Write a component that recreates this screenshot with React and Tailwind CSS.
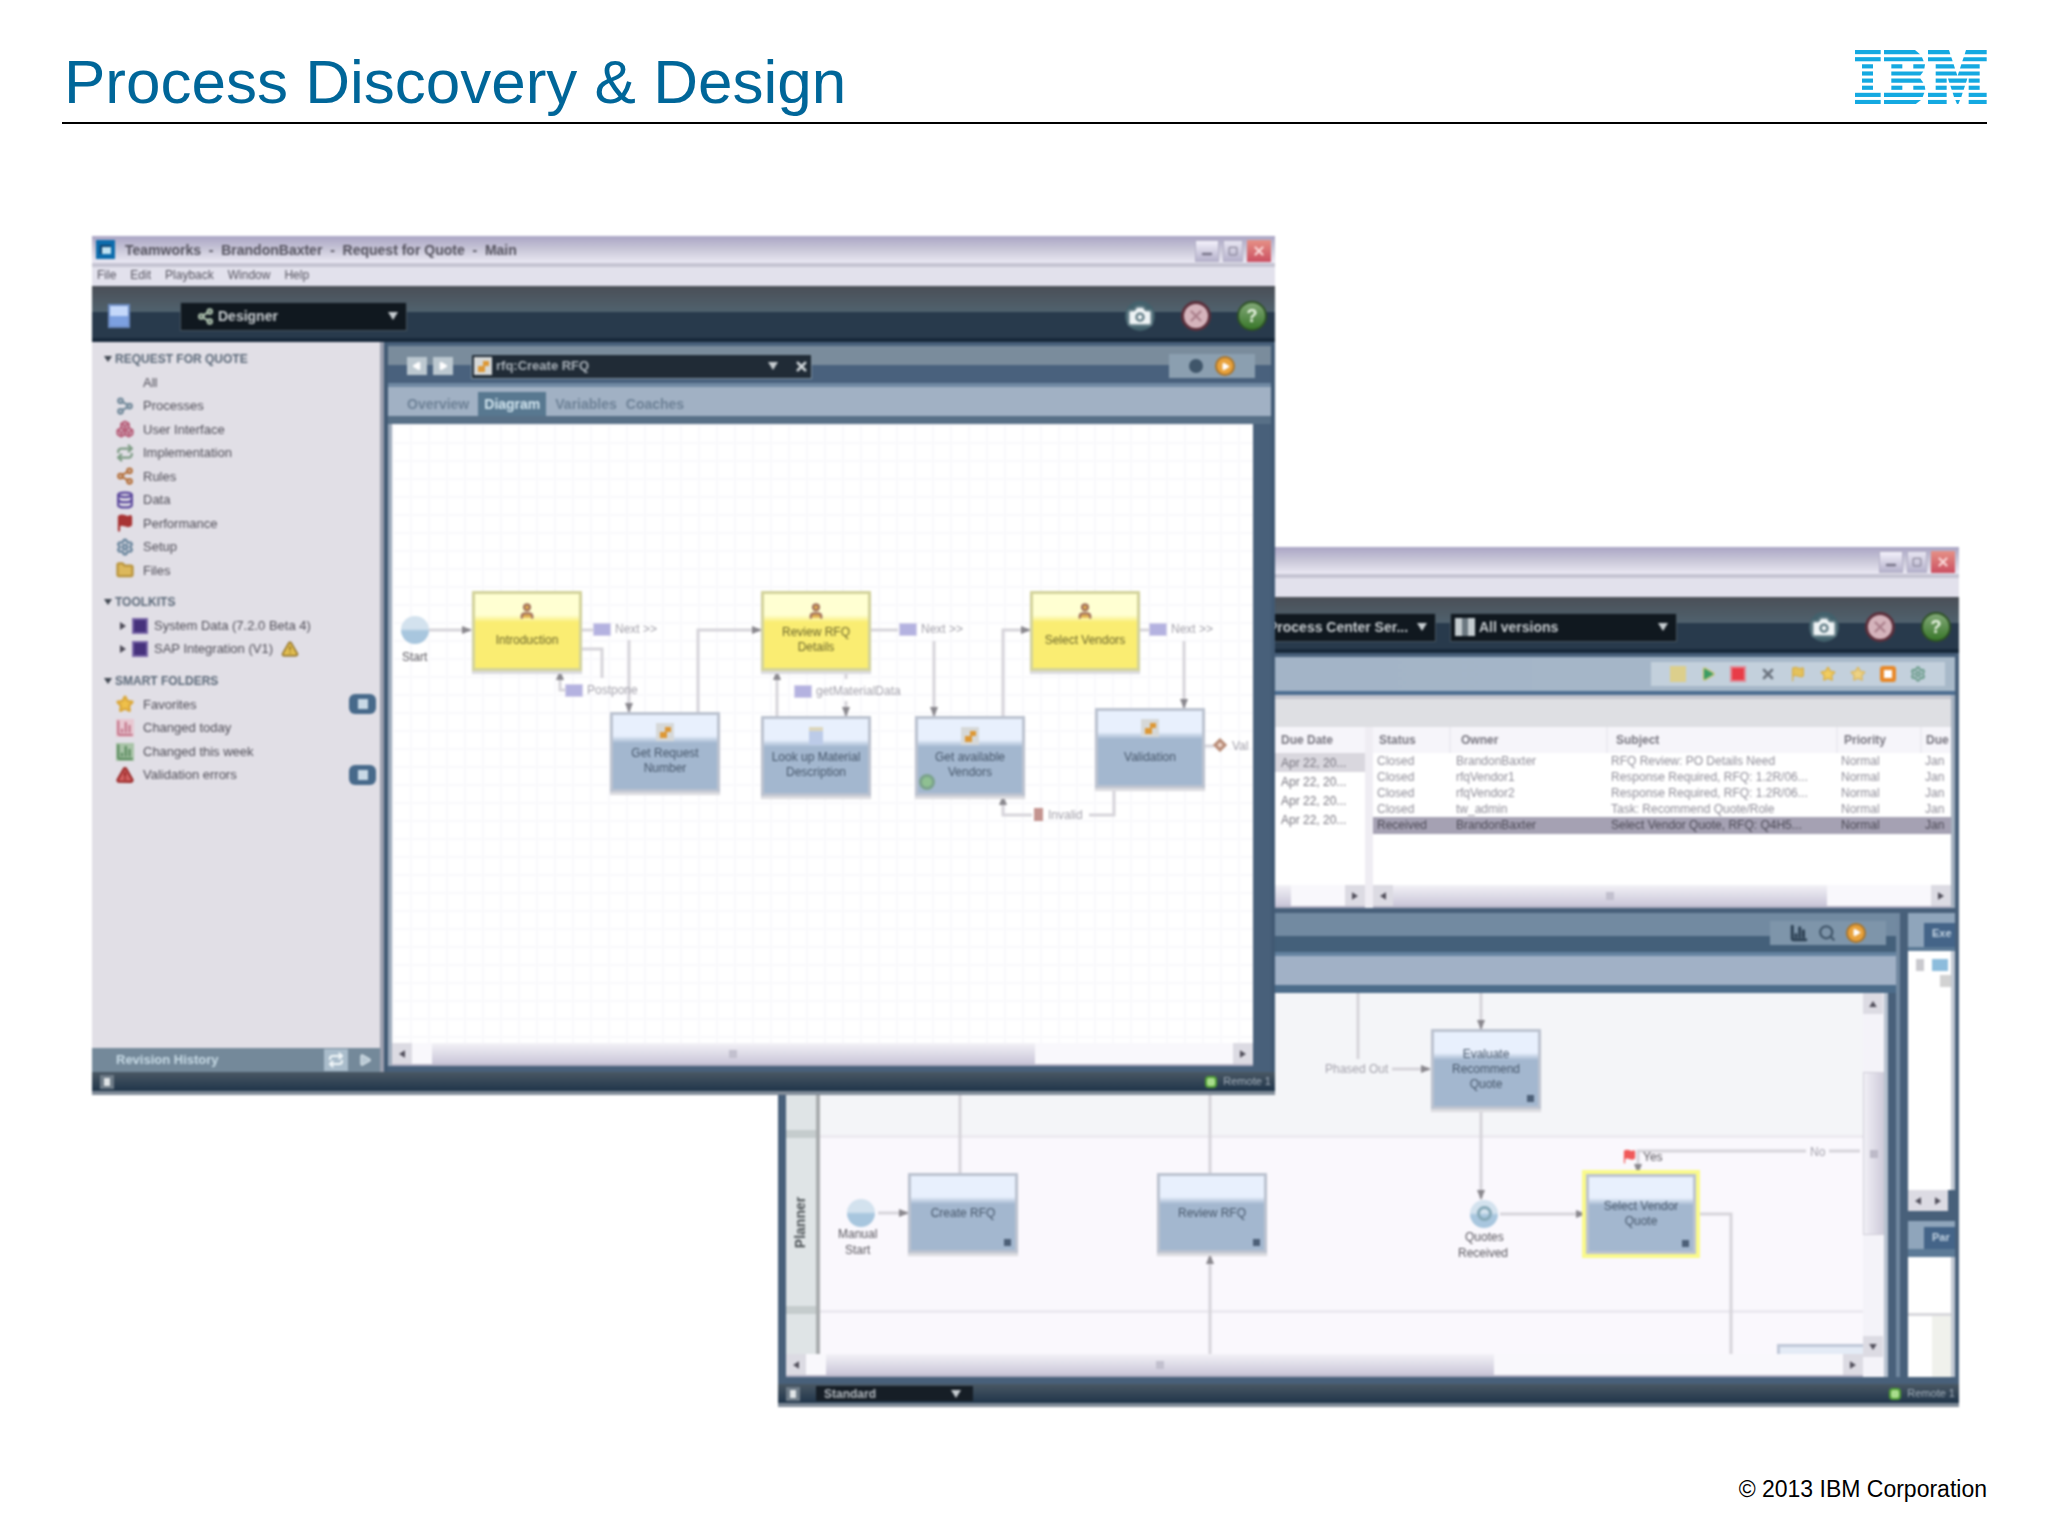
import React from 'react';
import {
    Boxes, Camera, ChartColumn, Database, Flag, Folder, Minus, Play, Repeat,
    Search, Settings, Share2, Square, Star, TriangleAlert, User, X,
} from 'lucide-react';

const treeItems = [
    { label: 'All' },
    { label: 'Processes', icon: Share2, color: 'text-[#71899a]', flip: true },
    { label: 'User Interface', icon: Boxes, color: 'text-[#b8627c]' },
    { label: 'Implementation', icon: Repeat, color: 'text-[#7d9c84]' },
    { label: 'Rules', icon: Share2, color: 'text-[#b5713c]' },
    { label: 'Data', icon: Database, color: 'text-[#5a479c]' },
    { label: 'Performance', icon: Flag, color: 'text-[#a83434] fill-[#a83434]' },
    { label: 'Setup', icon: Settings, color: 'text-[#66839b]' },
    { label: 'Files', icon: Folder, color: 'text-[#b8933c] fill-[#dcb85c]' },
];

const toolkits = [
    { label: 'System Data (7.2.0 Beta 4)' },
    { label: 'SAP Integration (V1)', warn: true },
];

const folders = [
    { label: 'Favorites', icon: Star, color: 'text-[#dba83c] fill-[#efc04a]', badge: true },
    { label: 'Changed today', icon: ChartColumn, color: 'text-[#c4788c] bg-[#e8c8d2]' },
    { label: 'Changed this week', icon: ChartColumn, color: 'text-[#5c8c60] bg-[#a9c4a8]' },
    { label: 'Validation errors', icon: TriangleAlert, color: 'text-[#9c2c2c] fill-[#d06060]', badge: true },
];

const tasks = [
    { status: 'Closed', owner: 'BrandonBaxter', subject: 'RFQ Review: PO Details Need', priority: 'Normal' },
    { status: 'Closed', owner: 'rfqVendor1', subject: 'Response Required, RFQ: 1.2R/06...', priority: 'Normal' },
    { status: 'Closed', owner: 'rfqVendor2', subject: 'Response Required, RFQ: 1.2R/06...', priority: 'Normal' },
    { status: 'Closed', owner: 'tw_admin', subject: 'Task: Recommend Quote/Role', priority: 'Normal' },
    { status: 'Received', owner: 'BrandonBaxter', subject: 'Select Vendor Quote, RFQ: Q4H5...', priority: 'Normal', active: true },
];

function IbmLogo() {
    // each bar: [top left, top right, bottom left, bottom right]
    const bars = [
        [[0, 77, 0, 77], [87, 180, 87, 195], [219, 282, 219, 286], [333, 395, 329, 395]],
        [[0, 77, 0, 77], [87, 201, 87, 206], [219, 289, 219, 293], [326, 395, 322, 395]],
        [[21, 54, 21, 54], [109, 142, 109, 142], [175, 210, 175, 208], [242, 296, 242, 300], [319, 374, 315, 374]],
        [[21, 54, 21, 54], [109, 205, 109, 196], [242, 303, 242, 307], [312, 374, 308, 374]],
        [[21, 54, 21, 54], [109, 196, 109, 205], [242, 275, 242, 275], [279, 337, 283, 333], [341, 374, 341, 374]],
        [[21, 54, 21, 54], [109, 142, 109, 142], [175, 209, 175, 211], [242, 275, 242, 275], [286, 330, 290, 326], [341, 374, 341, 374]],
        [[0, 77, 0, 77], [87, 208, 87, 203], [219, 275, 219, 275], [293, 323, 297, 319], [341, 395, 341, 395]],
        [[0, 77, 0, 77], [87, 198, 87, 182], [219, 275, 219, 275], [301, 315, 306, 310], [341, 395, 341, 395]],
    ];
    return (
        <svg viewBox="0 0 396 162" className="mt-1 h-[54px] w-[132px]" fill="#14a9e1" role="img" aria-label="IBM">
            {bars.map((row, i) => row.map(([a, b, c, d]) => (
                <polygon key={`${i}-${a}`} points={`${a},${i * 21.4} ${b},${i * 21.4} ${d},${i * 21.4 + 12.5} ${c},${i * 21.4 + 12.5}`} />
            )))}
        </svg>
    );
}

function TitleBar({ title }) {
    return (
        <div className="flex h-[31px] items-start border-b-4 border-[#c5c4d2] bg-linear-to-b from-[#aaa5c4] via-[#c9c7d8] to-[#ebe9f4] pl-1">
            {title && (
                <>
                    <div className="mt-1 flex h-[19px] w-[19px] items-center justify-center bg-[#0d6cac]">
                        <div className="h-[9px] w-[11px] border-t-2 border-l-2 border-[#0d3f6c] bg-[#bfe2f2]"></div>
                    </div>
                    <h2 className="ml-[10px] text-[14px] leading-[28px] font-bold whitespace-pre text-[#55535f]">{title}</h2>
                </>
            )}
            <div className="mt-1 mr-1 ml-auto flex gap-1">
                <button aria-label="Minimize" className="flex h-[22px] w-6 items-end justify-center border border-[#b3b0c6] bg-linear-to-b from-[#f4f2fc] to-[#b5b1cb]"><Minus size={14} strokeWidth={4} className="text-[#777488]" /></button>
                <button aria-label="Restore" className="flex h-[22px] w-5 items-center justify-center border border-[#b3b0c6] bg-linear-to-b from-[#e8e6f2] to-[#b5b1cb]"><Square size={10} strokeWidth={3} className="text-[#8a879a]" /></button>
                <button aria-label="Close" className="flex h-[22px] w-6 items-center justify-center bg-linear-to-b from-[#e59086] to-[#cb4f62]"><X size={14} strokeWidth={4} className="text-[#f8d4d4]" /></button>
            </div>
        </div>
    );
}

function MenuBar({ items = [] }) {
    return (
        <nav className="flex h-[19px] items-center gap-[14px] bg-[#e2e1ec] pb-1 pl-[5px] text-[12px] text-[#55535f]">
            {items.map((item) => <button key={item}>{item}</button>)}
        </nav>
    );
}

function DarkSelect({ label, value, width, icon }) {
    return (
        <label className={`relative flex h-[29px] items-center gap-1 border border-[#47545f] bg-[#10181f] text-[14px] font-bold text-[#c9ced2] ${width}`}>
            {icon}
            <select aria-label={label} className="w-full appearance-none bg-transparent outline-none">
                <option>{value}</option>
            </select>
            <Caret className="mr-2" />
        </label>
    );
}

function Caret({ className = '' }) {
    return (
        <svg viewBox="0 0 10 8" className={`h-2 w-[10px] shrink-0 ${className}`} fill="#c6ccd0"><path d="M0 0h10L5 8z" /></svg>
    );
}

function RoundButtons() {
    return (
        <div className="mr-2 ml-auto flex items-center gap-[26px]">
            <button aria-label="Snapshot" className="flex h-[30px] w-[30px] items-center justify-center rounded-full bg-[#43616c]">
                <Camera size={28} strokeWidth={2} className="fill-[#eef3f5] text-[#637d86]" />
            </button>
            <button aria-label="Stop" className="flex h-[30px] w-[30px] items-center justify-center rounded-full border-3 border-[#5c303c] bg-[#d5b4bc]">
                <X size={18} strokeWidth={3} className="text-[#ab808c]" />
            </button>
            <button aria-label="Help" className="flex h-[30px] w-[30px] items-center justify-center rounded-full border-2 border-[#2d5224] bg-linear-to-b from-[#82a877] to-[#39782a] text-[18px] font-bold text-[#e8f4e2]">?</button>
        </div>
    );
}

function ToolBar({ children }) {
    return (
        <div className="flex h-14 items-center border-b-4 border-[#17283a] bg-linear-to-b from-[#4a4f57] from-0% via-[#50626e] via-50% to-[#283a4c] to-50% pt-2">
            {children}
            <RoundButtons />
        </div>
    );
}

function ScrollArrow({ dir, label }) {
    const turn = { left: 'rotate-180', right: '', up: '-rotate-90', down: 'rotate-90' }[dir];
    return (
        <button aria-label={label} className="flex h-[21px] w-5 shrink-0 items-center justify-center bg-[#dcdbe3]">
            <svg viewBox="0 0 8 10" className={`h-2 w-[6px] ${turn}`} fill="#504e5a"><path d="M0 0l8 5-8 5z" /></svg>
        </button>
    );
}

function HScroll({ thumb, className = '' }) {
    return (
        <div className={`flex h-[23px] shrink-0 items-center border-b-2 border-[#b4b2c4] bg-[#f9f8fc] ${className}`}>
            <ScrollArrow dir="left" label="Scroll left" />
            <div className={`flex h-full items-center justify-center bg-linear-to-b from-[#f3f2f7] to-[#c9c6d8] ${thumb}`}>
                <div className="h-2 w-2 bg-[#c2c0ce]"></div>
            </div>
            <div className="ml-auto"><ScrollArrow dir="right" label="Scroll right" /></div>
        </div>
    );
}

function StatusBar({ children }) {
    return (
        <footer className="flex h-[23px] shrink-0 items-center border-b-4 border-[#808b98] bg-linear-to-b from-[#4a5864] to-[#20354a] pr-1">
            <div className="ml-2 flex h-[14px] w-[14px] items-center justify-center bg-[#6f7c88]"><div className="h-2 w-[6px] bg-[#dfe4e6]"></div></div>
            {children}
            <div className="ml-auto h-3 w-3 rounded-sm border-2 border-[#4f9c34] bg-[#a8dc8c]"></div>
            <span className="ml-[6px] text-[11px] leading-none text-[#a5b1bd]">Remote 1</span>
        </footer>
    );
}

function TreeHeading({ children }) {
    return (
        <button className="flex flex-1 items-center pl-3 text-[12px] font-bold text-[#5a6878]">
            <svg viewBox="0 0 8 6" className="mr-[3px] h-[6px] w-2" fill="#3f4650"><path d="M0 0h8L4 6z" /></svg>
            {children}
        </button>
    );
}

function TreeItem({ item }) {
    const Icon = item.icon;
    return (
        <li className="flex min-h-0 flex-1 items-center pr-1 pl-6 text-[13px] text-[#504e58]">
            <span className="flex w-[27px] items-center">
                {Icon && <Icon size={18} strokeWidth={3} className={`${item.color} ${item.flip ? 'rotate-180' : ''}`} />}
            </span>
            <a href="#item">{item.label}</a>
            {item.badge && (
                <span className="ml-auto flex h-5 w-[27px] items-center justify-center rounded-md bg-[#47698a]">
                    <span className="h-[10px] w-[10px] bg-[#c8d8e6]"></span>
                </span>
            )}
        </li>
    );
}

function Sidebar() {
    return (
        <aside className="flex w-[292px] shrink-0 flex-col border-r-4 border-[#9a9fae] bg-[#e1dfe6]">
            <div className="flex grow flex-col pt-[5px]">
                <div className="flex h-[235px] flex-col">
                    <TreeHeading>REQUEST FOR QUOTE</TreeHeading>
                    <ul className="flex flex-9 flex-col">
                        {treeItems.map((item) => <TreeItem key={item.label} item={item} />)}
                    </ul>
                </div>
                <div className="mt-2 flex h-[71px] flex-col">
                    <TreeHeading>TOOLKITS</TreeHeading>
                    {toolkits.map((kit) => (
                        <div key={kit.label} className="flex flex-1 items-center pl-7 text-[13px] text-[#504e58]">
                            <svg viewBox="0 0 6 8" className="h-2 w-[6px]" fill="#4c4a56"><path d="M0 0l6 4-6 4z" /></svg>
                            <span className="mx-[6px] h-4 w-4 border-2 border-[#7a68a8] bg-[#46327c]"></span>
                            <a href="#toolkit">{kit.label}</a>
                            {kit.warn && <TriangleAlert size={18} className="ml-2 fill-[#e0bc50] text-[#8c6c20]" />}
                        </div>
                    ))}
                </div>
                <div className="mt-2 flex h-[118px] flex-col">
                    <TreeHeading>SMART FOLDERS</TreeHeading>
                    <ul className="flex flex-4 flex-col">
                        {folders.map((item) => <TreeItem key={item.label} item={item} />)}
                    </ul>
                </div>
            </div>
            <div className="flex h-6 items-center bg-[#74899a] pr-2 pl-6 text-[13px] font-bold text-[#c8dbe6]">
                Revision History
                <span className="ml-auto flex h-[22px] w-6 items-center justify-center bg-[#a9bccb]"><Repeat size={16} strokeWidth={3} className="text-[#f2f8fa]" /></span>
                <Play size={14} className="ml-[10px] fill-[#b8c8d4] text-[#d8e4ea]" />
            </div>
        </aside>
    );
}

function PlayDot() {
    return (
        <button aria-label="Run" className="flex h-5 w-5 items-center justify-center rounded-full border-2 border-[#a8742c] bg-[#e8a23c]"><Play size={9} className="fill-white text-white" /></button>
    );
}

// x / y are canvas coordinates of the node's top left corner
function Node({ x, y, label, tone = 'blue', icon, selected, subprocess }) {
    const tones = {
        yellow: 'border-[#d3d39c] from-[#ffffd2] to-[#faed72]',
        blue: 'border-[#bcc3d0] from-[#e8f0fd] to-[#a3b7cf]',
    };
    return (
        <div
            className={`absolute flex h-20 w-[110px] flex-col items-center justify-center border-3 bg-linear-to-b from-28% to-38% text-center text-[12px] leading-[15px] ${tones[tone]} ${icon ? 'pt-2 pb-2' : ''} ${selected ? 'outline-4 outline-[#fafa8a]' : 'shadow-[0_3px_1px_#dcdce0]'}`}
            style={{ left: x, top: y }}
        >
            {icon === 'user' && <User size={18} strokeWidth={3} className="shrink-0 fill-[#e0b050] text-[#a2705c]" />}
            {icon === 'script' && <Flow />}
            {icon === 'page' && <div className="h-[18px] w-[14px] shrink-0 border-t-4 border-[#dcd6bc] bg-[#bccbe8]"></div>}
            <span className={`flex items-center whitespace-pre ${icon ? 'grow' : ''} ${tone === 'yellow' ? 'text-[#6c662c]' : 'text-[#46566a]'}`}>{label}</span>
            {subprocess && <span className="absolute right-1 bottom-1 h-[7px] w-[7px] bg-[#4d6078]"></span>}
        </div>
    );
}

function Flow() {
    return (
        <svg viewBox="0 0 18 18" className="h-[18px] w-[18px] shrink-0">
            <rect width="18" height="18" fill="#d6d8d8" />
            <path d="M4 15V9h5V4h6v5h-4v6z" fill="#dd9836" />
        </svg>
    );
}

function Label({ x, y, children, icon, dark }) {
    return (
        <span className={`absolute flex h-4 items-center gap-1 text-center text-[12px] leading-4 whitespace-pre ${dark ? 'text-[#57555c]' : 'text-[#a3a1ab]'}`} style={{ left: x, top: y - 8 }}>
            {icon && <i className="h-[13px] w-[18px] border border-[#d4d2ea] bg-[#b4b2e0]"></i>}
            {children}
        </span>
    );
}

function Edges({ paths, id }) {
    return (
        <svg className="absolute inset-0 h-full w-full" fill="none" stroke="#d6d4da" strokeWidth="3">
            <defs>
                <marker id={id} markerUnits="userSpaceOnUse" markerWidth="10" markerHeight="8" refX="9" refY="4" orient="auto">
                    <path d="M0 0l10 4-10 4z" fill="#8a888e" stroke="none" />
                </marker>
            </defs>
            {paths.map(([d, arrow]) => <path key={d} d={d} markerEnd={arrow ? `url(#${id})` : undefined} />)}
        </svg>
    );
}

function Ball({ x, y }) {
    return (
        <div className="absolute h-7 w-7 rounded-full bg-linear-to-b from-[#d3e2ee] from-45% to-[#a8c6de] to-55%" style={{ left: x - 14, top: y - 14 }}></div>
    );
}

const designerEdges = [
    ['M37 206H79', true],
    ['M189 206H202'],
    ['M237 216V288', true],
    ['M189 225H210V254'],
    ['M173 266H168V247', true],
    ['M306 288V206H369', true],
    ['M479 206H506'],
    ['M542 217V292', true],
    ['M385 292V247', true],
    ['M454 247V255'],
    ['M454 277V292', true],
    ['M611 292V206H638', true],
    ['M748 206H757'],
    ['M792 217V284', true],
    ['M812 322H822'],
    ['M722 364V391H697'],
    ['M640 391H611V372', true],
];

function DesignerCanvas() {
    return (
        <div className="relative grow overflow-hidden bg-white bg-[linear-gradient(#f9f9fc_2px,transparent_2px),linear-gradient(90deg,#f9f9fc_2px,transparent_2px)] bg-size-[18px_18px]">
            <Edges id="arrow-a" paths={designerEdges} />
            <Ball x={23} y={206} />
            <Label x={10} y={233} dark>Start</Label>
            <Node x={80} y={167} tone="yellow" icon="user" label="Introduction" />
            <Node x={218} y={288} icon="script" label={'Get Request\nNumber'} />
            <Node x={369} y={167} tone="yellow" icon="user" label={'Review RFQ\nDetails'} />
            <Node x={369} y={292} icon="page" label={'Look up Material\nDescription'} />
            <Node x={523} y={292} icon="script" label={'Get available\nVendors'} />
            <Node x={638} y={167} tone="yellow" icon="user" label="Select Vendors" />
            <Node x={703} y={284} icon="script" label="Validation" />
            <div className="absolute top-[350px] left-[527px] h-4 w-4 rounded-full border-3 border-[#7ba38c] bg-[#8fc092]"></div>
            <Label x={201} y={205} icon>Next &gt;&gt;</Label>
            <Label x={173} y={266} icon>Postpone</Label>
            <Label x={507} y={205} icon>Next &gt;&gt;</Label>
            <Label x={402} y={267} icon>getMaterialData</Label>
            <Label x={757} y={205} icon>Next &gt;&gt;</Label>
            <div className="absolute top-[384px] left-[642px] h-[13px] w-[9px] bg-[#c49490]"></div>
            <Label x={656} y={391}>Invalid</Label>
            <div className="absolute top-[316px] left-[823px] h-[10px] w-[10px] rotate-45 border-3 border-[#b88c78] bg-[#f0d8cc]"></div>
            <Label x={840} y={322}>Val</Label>
        </div>
    );
}

function DesignerWindow() {
    return (
        <section className="absolute top-[112px] right-[773px] left-[92px] z-10 flex h-[859px] flex-col bg-[#48607a] blur-[1px]">
            <TitleBar title="Teamworks  -  BrandonBaxter  -  Request for Quote  -  Main" />
            <MenuBar items={['File', 'Edit', 'Playback', 'Window', 'Help']} />
            <ToolBar>
                <button aria-label="Save" className="mr-[50px] ml-4 h-6 w-[22px] border-2 border-[#6c8cc4] bg-linear-to-b from-[#c4d8fa] from-50% to-[#7ca0e0] to-50%"></button>
                <DarkSelect
                    label="View"
                    value="Designer"
                    width="w-[227px] pl-4"
                    icon={<Share2 size={17} strokeWidth={3} className="shrink-0 text-[#b4c8b4]" />}
                />
            </ToolBar>
            <div className="flex min-h-0 grow">
                <Sidebar />
                <div className="flex min-w-0 grow flex-col border-r-4 border-l-4 border-[#425a74] pt-1">
                    <div className="flex h-[37px] shrink-0 items-center bg-linear-to-b from-[#7a8c9c] from-50% to-[#49617d] to-50% pt-[3px] pr-4 pl-[19px]">
                        <button aria-label="Back" className="flex h-[18px] w-5 items-center justify-center bg-[#bcc8d0]"><Play size={10} className="rotate-180 fill-white text-white" /></button>
                        <button aria-label="Forward" className="ml-[6px] flex h-[18px] w-5 items-center justify-center bg-[#bcc8d0]"><Play size={10} className="fill-white text-white" /></button>
                        <div className="ml-[18px] flex h-[25px] w-[341px] items-center gap-1 border border-[#7f919f] bg-[#202b36] pl-[2px] text-[13px] font-bold text-[#aab2ba]">
                            <Flow />
                            <select aria-label="Open item" className="grow appearance-none bg-transparent outline-none"><option>rfq:Create RFQ</option></select>
                            <Caret />
                            <button aria-label="Close item" className="mr-[2px] ml-3"><X size={15} strokeWidth={4} className="text-[#d0d6da]" /></button>
                        </div>
                        <div className="ml-auto flex h-6 w-[86px] items-center justify-end gap-3 bg-[#8b9fb0] pr-5">
                            <i className="h-[14px] w-[14px] rounded-full bg-[#40566a]"></i>
                            <PlayDot />
                        </div>
                    </div>
                    <div className="flex h-[41px] shrink-0 items-end gap-[9px] border-t-4 border-b-8 border-t-[#7089a3] border-b-[#587087] bg-[#a1b1c4] pl-[19px] text-[14px] font-bold text-[#6d8196]">
                        <button className="h-6">Overview</button>
                        <button className="h-6 bg-[#587890] px-[6px] text-[#d3e6f0]">Diagram</button>
                        <button className="h-6">Variables</button>
                        <button className="h-6">Coaches</button>
                    </div>
                    <div className="mr-1 flex min-h-0 grow flex-col border-r-14 border-l-4 border-r-[#48607a] border-l-[#9ca9ba]">
                        <DesignerCanvas />
                        <HScroll thumb="ml-5 w-[70%]" />
                    </div>
                    <div className="h-[6px] shrink-0"></div>
                </div>
            </div>
            <StatusBar />
        </section>
    );
}

function TaskTables() {
    return (
        <div className="flex h-[181px] shrink-0 bg-white text-[12px]">
            <div className="flex w-[595px] shrink-0 flex-col border-r-8 border-[#efedf3]">
                <table className="w-full text-left text-[#77757f]">
                    <thead className="h-[26px] bg-[#f6f5fa]">
                        <tr><th className="pl-[503px] whitespace-nowrap">Due Date</th></tr>
                    </thead>
                    <tbody>
                        {[0, 1, 2, 3].map((i) => (
                            <tr key={i} className={i === 0 ? 'h-[19px] bg-[#d9d7de]' : 'h-[19px]'}>
                                <td className="pl-[503px] whitespace-nowrap">Apr 22, 20...</td>
                            </tr>
                        ))}
                    </tbody>
                </table>
                <HScroll thumb="w-[84%]" className="mt-auto" />
            </div>
            <div className="flex min-w-0 grow flex-col overflow-hidden">
                <table className="w-full table-fixed text-left text-[#8f8d98]">
                    <thead className="h-[26px] bg-[#f6f5fa] text-[#77757f]">
                        <tr>
                            <th className="w-[77px] border-r-2 border-[#ecebf1] pl-[6px]">Status</th>
                            <th className="w-[157px] border-r-2 border-[#ecebf1] pl-[10px]">Owner</th>
                            <th className="w-[230px] border-r-2 border-[#ecebf1] pl-2">Subject</th>
                            <th className="w-[84px] border-r-2 border-[#ecebf1] pl-[6px]">Priority</th>
                            <th className="pl-1 whitespace-nowrap">Due</th>
                        </tr>
                    </thead>
                    <tbody>
                        {tasks.map((t, i) => (
                            <tr key={i} className={t.active ? 'h-[17px] bg-[#a5a1b3] leading-[15px] text-[#4c4a56]' : 'h-4 leading-[15px]'}>
                                <td className="pl-1">{t.status}</td>
                                <td className="pl-[6px]">{t.owner}</td>
                                <td className="pl-1 whitespace-nowrap">{t.subject}</td>
                                <td className="pl-1">{t.priority}</td>
                                <td className="pl-1 whitespace-nowrap">Jan</td>
                            </tr>
                        ))}
                    </tbody>
                </table>
                <HScroll thumb="w-[75%]" className="mt-auto" />
            </div>
        </div>
    );
}

const inspectorEdges = [
    ['M140 0V180'],
    ['M390 0V180'],
    ['M390 365V262', true],
    ['M661 0V36', true],
    ['M538 0V66'],
    ['M572 76H610', true],
    ['M661 118V206', true],
    ['M680 221H765', true],
    ['M1040 158H1009'],
    ['M986 158H818V180', true],
    ['M878 221H911V365'],
    ['M58 220H88', true],
];

function InspectorCanvas() {
    return (
        <div className="relative min-w-0 grow overflow-hidden bg-[#faf8fd]">
            <div className="h-[145px] border-b-3 border-[#eceaf0] bg-[#f4f5f8]"></div>
            <div className="h-[175px] border-b-3 border-[#ebe9f0]"></div>
            <Edges id="arrow-b" paths={inspectorEdges} />
            <Ball x={41} y={220} />
            <Label x={18} y={241} dark>Manual</Label>
            <Label x={25} y={257} dark>Start</Label>
            <Node x={88} y={180} label="Create RFQ" subprocess />
            <Node x={337} y={180} label="Review RFQ" subprocess />
            <Node x={611} y={36} label={'Evaluate\nRecommend\nQuote'} subprocess />
            <Node x={766} y={181} label={'Select Vendor\nQuote'} subprocess selected />
            <Label x={505} y={76}>Phased Out</Label>
            <Ball x={664} y={221} />
            <div className="absolute top-[213px] left-[657px] h-[15px] w-[15px] rounded-full border-3 border-[#86a9b8]"></div>
            <Label x={645} y={244} dark>Quotes</Label>
            <Label x={638} y={260} dark>Received</Label>
            <Flag size={15} className="absolute top-[156px] left-[802px] fill-[#f05a5a] text-[#f05a5a]" />
            <Label x={823} y={164} dark>Yes</Label>
            <Label x={990} y={159}>No</Label>
            <div className="absolute right-0 bottom-0 h-[10px] w-[86px] border-t-3 border-l-3 border-[#c0c8d8] bg-[#e4ebf6]"></div>
        </div>
    );
}

function InspectorTools() {
    return (
        <div className="ml-auto flex h-6 w-[294px] items-center justify-center gap-[14px] bg-[#c3d0dc]">
            <i className="h-4 w-4 bg-[#dccf8c]"></i>
            <Play size={16} className="fill-[#3c9c64] text-[#c8c47c]" />
            <i className="h-4 w-4 border-2 border-[#e08c98] bg-[#e83c48]"></i>
            <X size={16} strokeWidth={4} className="text-[#6c7480]" />
            <Flag size={16} className="fill-[#e4c25c] text-[#d8b04c]" />
            <Star size={16} className="fill-[#f0cc60] text-[#dcb044]" />
            <Star size={16} className="fill-[#ecd284] text-[#dcb860]" />
            <Square size={16} strokeWidth={6} className="fill-white text-[#e88828]" />
            <Settings size={16} strokeWidth={3} className="text-[#6c9c8c]" />
        </div>
    );
}

function InspectorWindow() {
    return (
        <section className="absolute top-[423px] right-[89px] left-[778px] flex h-[860px] flex-col bg-[#48607a] blur-[1px]">
            <TitleBar />
            <MenuBar />
            <ToolBar>
                <div className="flex w-full min-w-0 justify-end gap-[14px] pr-[132px]">
                    <DarkSelect label="Server" value="Process Center Ser..." width="w-[227px] pl-[58px]" />
                    <DarkSelect
                        label="Version"
                        value="All versions"
                        width="w-[227px] pl-1"
                        icon={<i className="h-[18px] w-5 shrink-0 border-x-7 border-[#c4ccd0] bg-[#6c7880]"></i>}
                    />
                </div>
            </ToolBar>
            <div className="mt-1 mr-1 flex h-[38px] shrink-0 items-center border-b-4 border-[#4c6d90] bg-linear-to-r from-[#9fb0c6] to-[#a8b9c9] pr-[10px]">
                <InspectorTools />
            </div>
            <div className="mr-1 border-r-4 border-[#a3b0bf]">
                <div className="h-8 border-t-4 border-[#c3c4cd] bg-[#dedfe3]"></div>
                <TaskTables />
            </div>
            <div className="mt-[5px] mr-1 flex min-h-0 grow gap-2">
                <div className="flex min-w-0 grow flex-col border-r-4 border-l-8 border-[#7188a0] border-l-[#48607a]">
                    <div className="flex h-[39px] shrink-0 items-center bg-linear-to-b from-[#728aa1] from-60% to-[#44607a] to-60% pr-[10px]">
                        <div className="ml-auto flex h-6 w-[116px] items-center justify-center gap-[10px] bg-[#7e95aa]">
                            <ChartColumn size={18} strokeWidth={4} className="text-[#2d4154]" />
                            <Search size={18} strokeWidth={3} className="text-[#41566a]" />
                            <PlayDot />
                        </div>
                    </div>
                    <div className="h-[41px] shrink-0 border-t-4 border-b-8 border-t-[#6583a0] border-b-[#4c6c8a] bg-[#a1b1c6]"></div>
                    <div className="mr-2 flex min-h-0 grow border-r-4 border-[#b5c0ce]">
                        <div className="flex min-w-0 grow flex-col">
                            <div className="flex min-h-0 grow">
                                <div className="flex w-[34px] shrink-0 flex-col border-r-4 border-[#a9acae] bg-[#dfe4e6] text-[14px] font-bold text-[#4c5256]">
                                    <div className="h-[145px] border-b-8 border-[#c5cccd]"></div>
                                    <div className="flex h-[176px] items-center justify-center border-b-8 border-[#c5cccd]">
                                        <span className="-rotate-90">Planner</span>
                                    </div>
                                </div>
                                <InspectorCanvas />
                            </div>
                            <HScroll thumb="ml-5 w-[62%]" />
                        </div>
                        <div className="flex w-[21px] shrink-0 flex-col bg-[#f4f3f9]">
                            <ScrollArrow dir="up" label="Scroll up" />
                            <div className="mt-[58px] flex h-[163px] items-center justify-center border border-[#d0ced8] bg-linear-to-r from-[#f1f0f6] to-[#cfccdb]">
                                <div className="h-2 w-2 bg-[#bdbac8]"></div>
                            </div>
                            <div className="mt-auto mb-5"><ScrollArrow dir="down" label="Scroll down" /></div>
                        </div>
                    </div>
                </div>
                <div className="flex w-[47px] shrink-0 flex-col">
                    <div className="flex h-[38px] shrink-0 items-end border-b-4 border-[#5c7a96] bg-[#8fa5bb] pl-4">
                        <span className="h-6 w-full bg-[#446488] pl-2 text-[11px] leading-5 font-bold text-[#c3d3e2]">Exe</span>
                    </div>
                    <div className="h-[239px] overflow-hidden border-r-4 border-[#c0c8d2] bg-white pt-2 pl-2">
                        <div className="flex gap-2"><i className="h-3 w-2 bg-[#c9c9ce]"></i><i className="h-3 w-4 bg-[#8cbcdc]"></i></div>
                        <i className="mt-1 ml-6 block h-3 w-3 bg-[#d2d2d2]"></i>
                    </div>
                    <div className="flex"><ScrollArrow dir="left" label="Scroll left" /><ScrollArrow dir="right" label="Scroll right" /></div>
                    <div className="mt-[10px] flex h-[36px] shrink-0 items-end border-b-8 border-[#5c7a96] bg-[#8fa5bb] pl-4">
                        <span className="h-[22px] w-full bg-[#446488] pl-2 text-[11px] leading-5 font-bold text-[#c3d3e2]">Par</span>
                    </div>
                    <div className="flex grow flex-col border-r-4 border-[#c0c8d2] bg-white">
                        <div className="h-[59px] border-b-3 border-[#d8d8dc]"></div>
                        <div className="ml-6 grow bg-[#f0f1ec]"></div>
                    </div>
                </div>
            </div>
            <div className="h-[7px] shrink-0"></div>
            <StatusBar>
                <label className="ml-4 flex h-[15px] w-[157px] items-center bg-[#161e26] pr-3 pl-2 text-[12px] leading-none font-bold text-[#b4bac0]">
                    <select aria-label="Log level" className="grow appearance-none bg-transparent outline-none"><option>Standard</option></select>
                    <Caret />
                </label>
            </StatusBar>
        </section>
    );
}

export default function App() {
    return (
        <div className="flex min-h-screen flex-col bg-white font-['Liberation_Sans',Arial,sans-serif]">
            <header className="mr-[61px] ml-[62px] flex items-start justify-between border-b-2 border-black pt-[46px] pb-1">
                <h1 className="pl-[2px] text-[62px] leading-[72px] text-[#006699]">Process Discovery &amp; Design</h1>
                <IbmLogo />
            </header>
            <main className="relative min-h-[1284px] grow">
                <InspectorWindow />
                <DesignerWindow />
            </main>
            <p className="pr-[61px] pb-8 text-right text-[23px] leading-[30px] text-black">© 2013 IBM Corporation</p>
        </div>
    );
}
